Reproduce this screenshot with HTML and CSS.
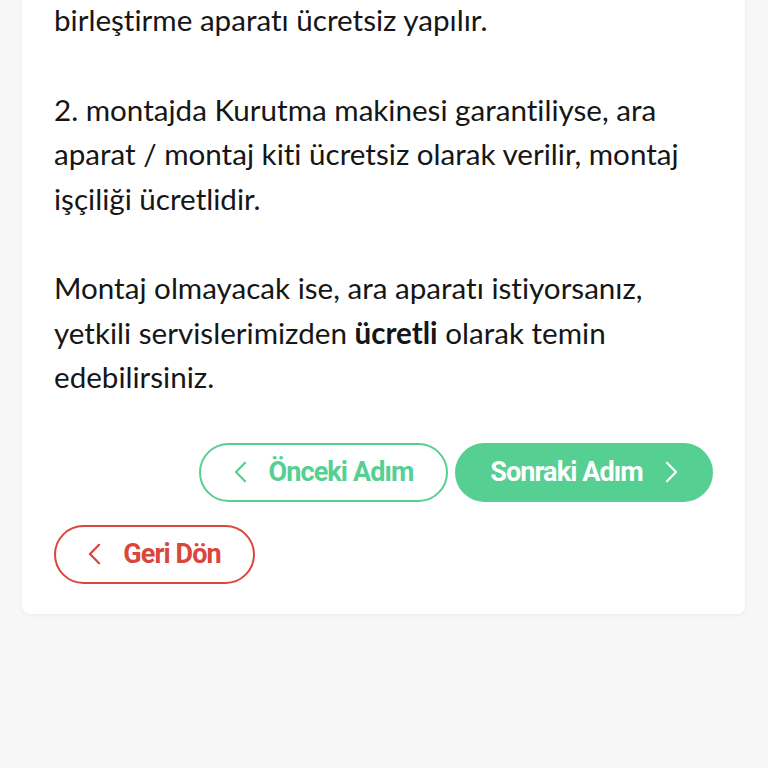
FILE: index.html
```html
<!DOCTYPE html>
<html lang="tr">

<head>
    <meta charset="UTF-8">
    <meta name="viewport" content="width=device-width, initial-scale=1.0">
    <title>Montaj Bilgisi</title>
    <link rel="stylesheet" href="styles.css">
</head>

<body>
    <div class="card">
        <div class="info">
            <p>birleştirme aparatı ücretsiz yapılır.</p>
            <p>2. montajda Kurutma makinesi garantiliyse, ara aparat / montaj kiti ücretsiz olarak verilir, montaj işçiliği ücretlidir.</p>
            <p>Montaj olmayacak ise, ara aparatı istiyorsanız, yetkili servislerimizden <b>ücretli</b> olarak temin edebilirsiniz.</p>
        </div>

        <div class="steps">
            <button class="btn btn-outline">
                <svg class="chev" viewBox="0 0 14 24"><path d="M12 2 L2 12 L12 22"/></svg>
                <span>Önceki Adım</span>
            </button>
            <button class="btn btn-fill">
                <span>Sonraki Adım</span>
                <svg class="chev" viewBox="0 0 14 24"><path d="M2 2 L12 12 L2 22"/></svg>
            </button>
        </div>

        <div class="back">
            <button class="btn btn-back">
                <svg class="chev" viewBox="0 0 14 24"><path d="M12 2 L2 12 L12 22"/></svg>
                <span>Geri Dön</span>
            </button>
        </div>
    </div>
</body>

</html>
```

FILE: styles.css
```css
* {
    padding: 0;
    margin: 0;
    box-sizing: border-box;
}

body {
    background-color: #f7f7f7;
    font-family: Lato, "Open Sans", sans-serif;
    min-height: 100vh;
}

.card {
    background-color: #fff;
    margin: -42px 23px 0 22px;
    padding: 40px 32px 30px 32px;
    border-radius: 8px;
    box-shadow: 0 1px 4px rgba(0, 0, 0, 0.06);
}

.info p {
    font-size: 29.6px;
    line-height: 44.5px;
    color: #161616;
    margin-bottom: 45px;
    font-variant-ligatures: no-common-ligatures;
}

.info p:last-child {
    margin-bottom: 43px;
}

.info b {
    font-weight: bold;
}

.steps {
    display: flex;
    justify-content: flex-end;
    gap: 7px;
}

.back {
    margin-top: 23px;
    display: flex;
}

.btn {
    display: flex;
    align-items: center;
    justify-content: center;
    gap: 22px;
    height: 59px;
    border-radius: 30px;
    font-family: Roboto, sans-serif;
    font-weight: bold;
    font-size: 27px;
    letter-spacing: -0.9px;
    background: #fff;
    cursor: pointer;
}

.chev {
    width: 13px;
    height: 22px;
    fill: none;
    stroke: currentColor;
    stroke-width: 2.4;
    stroke-linecap: round;
    stroke-linejoin: round;
}

.btn-outline {
    width: 249px;
    color: #55cf92;
    border: 2px solid #55cf92;
}

.btn-fill {
    width: 258px;
    color: #fff;
    background-color: #55cf92;
    border: 2px solid #55cf92;
}

.btn-back {
    width: 201px;
    color: #d9463e;
    border: 2px solid #d9463e;
}
```
